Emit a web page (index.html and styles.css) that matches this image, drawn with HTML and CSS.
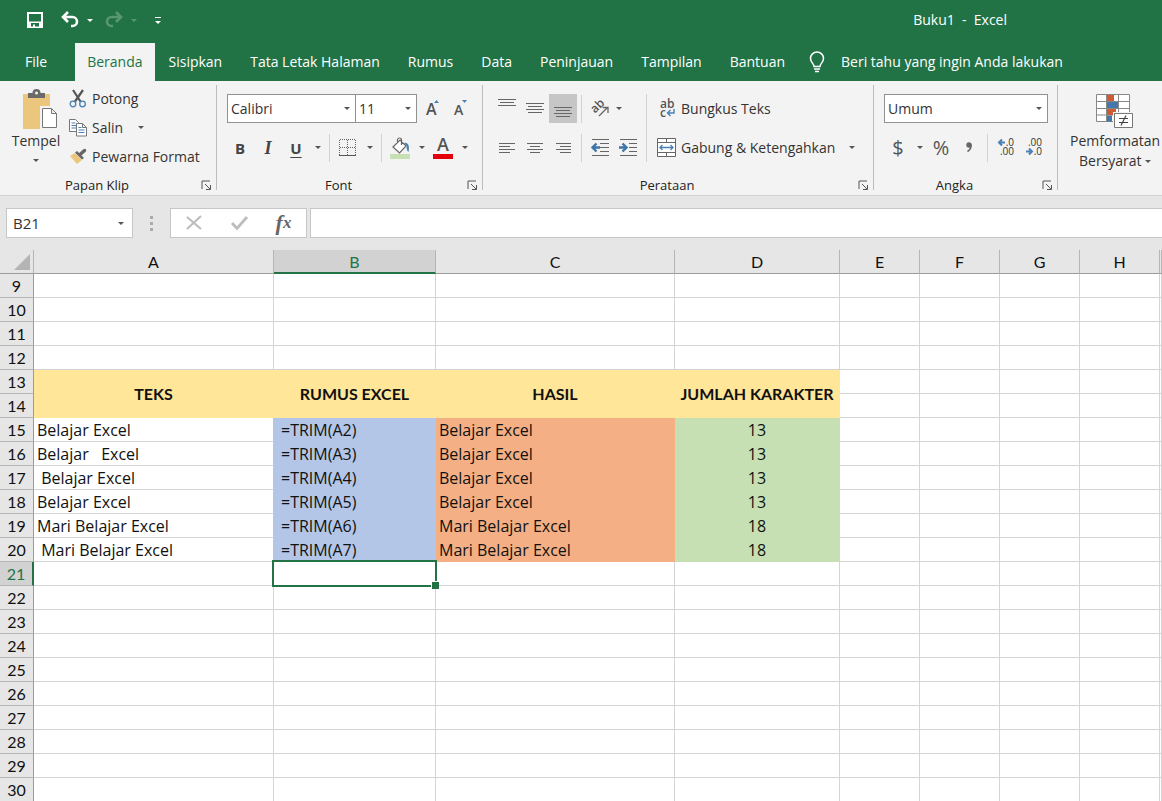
FILE: index.html
```html
<!DOCTYPE html>
<html lang="id">
<head>
<meta charset="utf-8">
<title>Buku1 - Excel</title>
<meta name="viewport" content="width=device-width, initial-scale=1">
<link rel="stylesheet" href="styles.css">
</head>
<body>
<div class="app">
<header class="titlebar">
  <div class="quick">
    <button class="quick-btn" aria-label="Simpan"><svg width="18" height="18" viewBox="0 0 18 18"><path fill="#fff" fill-rule="evenodd" d="M1 1h16v16H1zM3 3v7.500h12V3zM5 12v3.500h2V13.500h2V15.500h4V12z"/></svg></button>
    <button class="quick-btn" aria-label="Urungkan"><svg width="20" height="18" viewBox="0 0 20 18"><path d="M3 6h9.500a4.500 4.500 0 0 1 0 9H11M8 1 3 6l5 5" fill="none" stroke="#fff" stroke-width="2.600"/></svg></button>
    <button class="drop drop-light" aria-label="Daftar urungkan"></button>
    <button class="quick-btn faded" aria-label="Ulangi"><svg width="20" height="18" viewBox="0 0 20 18"><path d="M17 6H7.500a4.500 4.500 0 0 0 0 9H9M12 1l5 5-5 5" fill="none" stroke="#fff" stroke-width="2.600"/></svg></button>
    <button class="drop drop-light faded" aria-label="Daftar ulangi"></button>
    <button class="quick-btn customize" aria-label="Kustomisasi"><svg width="8" height="10" viewBox="0 0 8 10"><path d="M1 2.500h6" stroke="#fff"/><path d="M1 6h6L4 9z" fill="#fff"/></svg></button>
  </div>
  <h1 class="doc-title">Buku1&nbsp; -&nbsp; Excel</h1>
</header>
<nav class="tabs">
  <button class="tab tab-file">File</button>
  <button class="tab active">Beranda</button>
  <button class="tab">Sisipkan</button>
  <button class="tab">Tata Letak Halaman</button>
  <button class="tab">Rumus</button>
  <button class="tab">Data</button>
  <button class="tab">Peninjauan</button>
  <button class="tab">Tampilan</button>
  <button class="tab">Bantuan</button>
  <button class="tab tell"><svg width="16" height="22" viewBox="0 0 16 22"><path d="M5 15.500c0-3-3.500-4-3.500-8a6.500 6.500 0 0 1 13 0c0 4-3.500 5-3.500 8zM5 18h6M6 20.500h4" fill="none" stroke="#fff" stroke-width="1.500"/></svg>Beri tahu yang ingin Anda lakukan</button>
</nav>

<main class="ribbon">
  <section class="group clipboard">
    <div class="group-body">
      <button class="big paste"><svg width="36" height="40" viewBox="0 0 36 40"><path d="M1 5h27v35H1z" fill="#ecc67c"/><path d="M6 9V4h4.500a4 4 0 0 1 8 0H23v5z" fill="#6a6a6a"/><circle cx="14.500" cy="4" r="1.500" fill="#f3f3f3"/><path d="M18 17h17v23H18z" fill="#f3f3f3"/><path d="M20.500 19.500h9l5 5v14h-14zM29.500 19.500v5h5" fill="#fff" stroke="#777"/></svg><span>Tempel</span><i class="caret"></i></button>
      <div class="stack">
        <button class="item"><svg width="18" height="19" viewBox="0 0 18 19"><path d="M4 1l7.500 11.500M14 1 6 12.500" stroke="#555" stroke-width="2.200"/><circle cx="4" cy="15" r="2.800" fill="none" stroke="#4a80b5" stroke-width="1.300"/><circle cx="13.500" cy="15" r="2.800" fill="none" stroke="#4a80b5" stroke-width="1.300"/></svg>Potong</button>
        <button class="item"><svg width="18" height="19" viewBox="0 0 18 19"><path d="M.500 1.500h6l3 3v9h-9z" fill="#fff" stroke="#777"/><path d="M2.500 5h4M2.500 7.500h5M2.500 10h5" stroke="#4a80b5"/><path d="M7.500 5.500h6l4 4v8.500h-10zM13.500 5.500v4h4" fill="#fff" stroke="#777"/><path d="M9.500 9.500h3M9.500 12h6M9.500 14.500h6" stroke="#4a80b5"/></svg>Salin<i class="caret gap-left"></i></button>
        <button class="item"><svg width="18" height="17" viewBox="0 0 18 17"><path d="M1 8l5-3 7 7-5 4z" fill="#ecc67c"/><path d="M6 4.500 8 3l7 7-2 1.500z" fill="#666"/><path d="M11 6.500 15.500 2.500" stroke="#666" stroke-width="3.500" stroke-linecap="round"/></svg>Pewarna Format</button>
      </div>
    </div>
    <footer class="group-foot"><span>Papan Klip</span><button class="launch" aria-label="Pengaturan Papan Klip"><svg width="11" height="11" viewBox="0 0 11 11"><path d="M1 9V1h8M4 4l5 5M9.500 5v4.500H5" fill="none" stroke="#555"/></svg></button></footer>
  </section>
  <div class="divider"></div>

  <section class="group font">
    <div class="group-body rows">
      <div class="row">
        <label class="pick pick-font"><select aria-label="Font"><option>Calibri</option></select></label>
        <label class="pick pick-size"><select aria-label="Ukuran font"><option>11</option></select></label>
        <button class="tool grow" aria-label="Perbesar font"><svg width="16" height="20" viewBox="0 0 16 20"><text x="3" y="16" class="glyph g16">A</text><path d="M11 4l2.500-3L16 4z" fill="#4a80b5"/></svg></button>
        <button class="tool" aria-label="Perkecil font"><svg width="16" height="20" viewBox="0 0 16 20"><text x="3" y="16" class="glyph g14">A</text><path d="M11 1h5l-2.500 3z" fill="#4a80b5"/></svg></button>
      </div>
      <div class="row">
        <button class="tool bold">B</button>
        <button class="tool italic">I</button>
        <button class="tool under">U</button>
        <button class="drop" aria-label="Jenis garis bawah"></button>
        <div class="sep"></div>
        <button class="tool" aria-label="Batas"><svg width="18" height="18" viewBox="0 0 18 18"><path d="M1 .500h16M1 8.500h16M.500 1v16M8.500 1v16M16.500 1v16" stroke="#666" stroke-dasharray="1 1" fill="none"/><path d="M0 16.500h17" stroke="#555"/></svg></button>
        <button class="drop" aria-label="Jenis batas"></button>
        <div class="sep"></div>
        <button class="tool" aria-label="Warna isian"><svg width="20" height="22" viewBox="0 0 20 22"><path d="M3 10l7-7 6 6-6.500 7zM7.500 6V3a2 2 0 0 1 4 0v5" fill="#fff" stroke="#666" stroke-width="1.200"/><path d="M14 6c4-1 6 3 4.500 9-1.500-1-2-4-2-6z" fill="#4a80b5"/><path d="M0 17h20v5H0z" fill="#c6dfb3"/></svg></button>
        <button class="drop" aria-label="Pilih warna isian"></button>
        <button class="tool" aria-label="Warna font"><svg width="20" height="22" viewBox="0 0 20 22"><text x="10" y="14" text-anchor="middle" class="glyph g18">A</text><path d="M0 17h20v5H0z" fill="#e3000b"/></svg></button>
        <button class="drop" aria-label="Pilih warna font"></button>
      </div>
    </div>
    <footer class="group-foot"><span>Font</span><button class="launch" aria-label="Pengaturan Font"><svg width="11" height="11" viewBox="0 0 11 11"><path d="M1 9V1h8M4 4l5 5M9.500 5v4.500H5" fill="none" stroke="#555"/></svg></button></footer>
  </section>
  <div class="divider"></div>

  <section class="group align">
    <div class="group-body">
      <div class="rows">
        <div class="row">
          <button class="tool" aria-label="Rata atas"><svg width="18" height="20" viewBox="0 0 18 20"><path d="M0 .500h18M2 3.500h14M0 6.500h18" stroke="#666"/></svg></button>
          <button class="tool" aria-label="Rata tengah vertikal"><svg width="18" height="20" viewBox="0 0 18 20"><path d="M0 4.500h18M2 7.500h14M0 10.500h18M2 13.500h14" stroke="#666"/></svg></button>
          <button class="tool pressed" aria-label="Rata bawah"><svg width="18" height="20" viewBox="0 0 18 20"><path d="M0 8.500h18M2 11.500h14M0 14.500h18M2 17.500h14" stroke="#666"/></svg></button>
          <div class="sep"></div>
          <button class="tool" aria-label="Orientasi"><svg width="20" height="20" viewBox="0 0 20 20"><text x="3" y="14" transform="rotate(-45 5 12)" class="glyph g13">ab</text><path d="M9 17l8-8M12.500 8.500H18V14" fill="none" stroke="#666" stroke-width="1.300"/></svg></button>
          <button class="drop tight" aria-label="Pilihan orientasi"></button>
        </div>
        <div class="row">
          <button class="tool" aria-label="Rata kiri"><svg width="16" height="12" viewBox="0 0 16 12"><path d="M0 1.500h16M0 4.500h11M0 7.500h16M0 10.500h11" stroke="#666"/></svg></button>
          <button class="tool" aria-label="Rata tengah"><svg width="16" height="12" viewBox="0 0 16 12"><path d="M0 1.500h16M3 4.500h10M0 7.500h16M3 10.500h10" stroke="#666"/></svg></button>
          <button class="tool" aria-label="Rata kanan"><svg width="16" height="12" viewBox="0 0 16 12"><path d="M1 1.500h15M5 4.500h11M1 7.500h15M5 10.500h11" stroke="#666"/></svg></button>
          <div class="sep"></div>
          <button class="tool" aria-label="Kurangi inden"><svg width="20" height="17" viewBox="0 0 20 17"><path d="M2 .500h17M10 4.500h9M10 8.500h9M10 12.500h9M2 16.500h17" stroke="#666"/><path d="M10 8.500H3M6.500 4.500l-4 4 4 4" fill="none" stroke="#3e74a8" stroke-width="2.400"/></svg></button>
          <button class="tool" aria-label="Tambah inden"><svg width="20" height="17" viewBox="0 0 20 17"><path d="M2 .500h17M11 4.500h8M11 8.500h8M11 12.500h8M2 16.500h17" stroke="#666"/><path d="M1 8.500h7M4.500 4.500l4 4-4 4" fill="none" stroke="#3e74a8" stroke-width="2.400"/></svg></button>
        </div>
      </div>
      <div class="sep"></div>
      <div class="rows wraps">
        <button class="item wide"><svg width="20" height="20" viewBox="0 0 20 20"><text x="3" y="9" class="glyph g13">ab</text><text x="3" y="18" class="glyph g13">c</text><path d="M17 10v4H11M13.500 11l-3 3 3 3" fill="none" stroke="#4a80b5" stroke-width="1.400"/></svg>Bungkus Teks</button>
        <button class="item wide"><svg width="20" height="20" viewBox="0 0 20 20"><path d="M.500.500h18v18H.500zM.500 4.500h18M.500 14.500h18M9.500.500v4M9.500 14.500v4" fill="#fff" stroke="#666"/><path d="M3 9.500h13M5.500 7 3 9.500 5.500 12M13.500 7 16 9.500 13.500 12" fill="none" stroke="#4a80b5" stroke-width="1.300"/></svg>Gabung &amp; Ketengahkan<i class="caret gap-left"></i></button>
      </div>
    </div>
    <footer class="group-foot"><span>Perataan</span><button class="launch" aria-label="Pengaturan Perataan"><svg width="11" height="11" viewBox="0 0 11 11"><path d="M1 9V1h8M4 4l5 5M9.500 5v4.500H5" fill="none" stroke="#555"/></svg></button></footer>
  </section>
  <div class="divider"></div>

  <section class="group number">
    <div class="group-body rows">
      <div class="row"><label class="pick pick-format"><select aria-label="Format angka"><option>Umum</option></select></label></div>
      <div class="row">
        <button class="tool symbol dollar">$</button>
        <button class="drop" aria-label="Pilih mata uang"></button>
        <button class="tool symbol">%</button>
        <button class="tool" aria-label="Gaya koma"><svg width="10" height="14" viewBox="0 0 10 14"><circle cx="5" cy="4" r="2.700" fill="#666"/><path d="M6.800 3.500c.5 3-.8 5.500-3.300 7" fill="none" stroke="#666" stroke-width="1.700"/></svg></button>
        <div class="sep"></div>
        <button class="tool" aria-label="Tambah desimal"><svg width="18" height="19" viewBox="0 0 18 19"><text x="17" y="8" text-anchor="end" class="digits">.0</text><text x="17" y="17" text-anchor="end" class="digits">.00</text><path d="M8 4.500H3M5 1.500l-3 3 3 3" fill="none" stroke="#4a80b5" stroke-width="2"/></svg></button>
        <button class="tool" aria-label="Kurangi desimal"><svg width="18" height="19" viewBox="0 0 18 19"><text x="17" y="8" text-anchor="end" class="digits">.00</text><text x="17" y="17" text-anchor="end" class="digits">.0</text><path d="M1 13.500h5M4 10.500l3 3-3 3" fill="none" stroke="#4a80b5" stroke-width="2"/></svg></button>
      </div>
    </div>
    <footer class="group-foot"><span>Angka</span><button class="launch" aria-label="Pengaturan Angka"><svg width="11" height="11" viewBox="0 0 11 11"><path d="M1 9V1h8M4 4l5 5M9.500 5v4.500H5" fill="none" stroke="#555"/></svg></button></footer>
  </section>
  <div class="divider"></div>

  <section class="group styles">
    <button class="big conditional"><svg width="38" height="36" viewBox="0 0 38 36"><path d="M.500.500h33v27H.500zM.500 7.500h33M.500 14.500h33M.500 21h33M10.500.500v27M22.500.500v27" fill="#fff" stroke="#888"/><path d="M11 1h7v6h-7zM11 15h9v6h-9z" fill="#cf5b35"/><path d="M11 8h11v6H11zM11 21.500h5v6h-5z" fill="#4478ad"/><path d="M17 18h21v18H17z" fill="#f3f3f3"/><path d="M18.500 19.500h18v14h-18z" fill="#fff" stroke="#777"/><path d="M23 24.500h9M23 28.500h9M30 21.500l-5 10" stroke="#444" stroke-width="1.200"/></svg><span>Pemformatan</span><span>Bersyarat <i class="caret"></i></span></button>
  </section>
</main>

<div class="formula">
  <div class="namebox"><input type="text" value="B21" aria-label="Kotak nama"><button class="drop" aria-label="Daftar nama"></button></div>
  <div class="dots"><i></i><i></i><i></i></div>
  <div class="fx">
    <button aria-label="Batal"><svg width="18" height="16" viewBox="0 0 18 16"><path d="M2 2l14 12M16 1 2 14" stroke="#bdbdbd" stroke-width="2.200"/></svg></button>
    <button aria-label="Masukkan"><svg width="18" height="16" viewBox="0 0 18 16"><path d="M2 8l5 5.500L17 2" fill="none" stroke="#bdbdbd" stroke-width="2.800"/></svg></button>
    <button class="fx-name" aria-label="Sisipkan fungsi">f<small>x</small></button>
  </div>
  <input class="formula-input" type="text" aria-label="Bilah rumus">
</div>

<div class="sheet">
<table class="grid">
<colgroup><col class="c-num"><col class="c-a"><col class="c-b"><col class="c-c"><col class="c-d"><col class="c-std"><col class="c-std"><col class="c-std"><col class="c-std"><col></colgroup>
<thead><tr><th class="corner"><svg width="16" height="16" viewBox="0 0 16 16"><path d="M16 0v16H0z" fill="#b4b4b4"/></svg></th><th>A</th><th class="on">B</th><th>C</th><th>D</th><th>E</th><th>F</th><th>G</th><th>H</th><th></th></tr></thead>
<tbody>
<tr><th>9</th><td></td><td></td><td></td><td></td><td></td><td></td><td></td><td></td><td></td></tr>
<tr><th>10</th><td></td><td></td><td></td><td></td><td></td><td></td><td></td><td></td><td></td></tr>
<tr><th>11</th><td></td><td></td><td></td><td></td><td></td><td></td><td></td><td></td><td></td></tr>
<tr><th>12</th><td></td><td></td><td></td><td></td><td></td><td></td><td></td><td></td><td></td></tr>
<tr><th>13</th><td rowspan="2" class="head">TEKS</td><td rowspan="2" class="head">RUMUS EXCEL</td><td rowspan="2" class="head">HASIL</td><td rowspan="2" class="head">JUMLAH KARAKTER</td><td></td><td></td><td></td><td></td><td></td></tr>
<tr><th>14</th><td></td><td></td><td></td><td></td><td></td></tr>
<tr><th>15</th><td class="teks">Belajar Excel</td><td class="rumus">=TRIM(A2)</td><td class="hasil">Belajar Excel</td><td class="jumlah">13</td><td></td><td></td><td></td><td></td><td></td></tr>
<tr><th>16</th><td class="teks">Belajar   Excel</td><td class="rumus">=TRIM(A3)</td><td class="hasil">Belajar Excel</td><td class="jumlah">13</td><td></td><td></td><td></td><td></td><td></td></tr>
<tr><th>17</th><td class="teks"> Belajar Excel</td><td class="rumus">=TRIM(A4)</td><td class="hasil">Belajar Excel</td><td class="jumlah">13</td><td></td><td></td><td></td><td></td><td></td></tr>
<tr><th>18</th><td class="teks">Belajar Excel</td><td class="rumus">=TRIM(A5)</td><td class="hasil">Belajar Excel</td><td class="jumlah">13</td><td></td><td></td><td></td><td></td><td></td></tr>
<tr><th>19</th><td class="teks">Mari Belajar Excel</td><td class="rumus">=TRIM(A6)</td><td class="hasil">Mari Belajar Excel</td><td class="jumlah">18</td><td></td><td></td><td></td><td></td><td></td></tr>
<tr><th>20</th><td class="teks"> Mari Belajar Excel</td><td class="rumus">=TRIM(A7)</td><td class="hasil">Mari Belajar Excel</td><td class="jumlah">18</td><td></td><td></td><td></td><td></td><td></td></tr>
<tr><th class="on">21</th><td></td><td class="selected"></td><td></td><td></td><td></td><td></td><td></td><td></td><td></td></tr>
<tr><th>22</th><td></td><td></td><td></td><td></td><td></td><td></td><td></td><td></td><td></td></tr>
<tr><th>23</th><td></td><td></td><td></td><td></td><td></td><td></td><td></td><td></td><td></td></tr>
<tr><th>24</th><td></td><td></td><td></td><td></td><td></td><td></td><td></td><td></td><td></td></tr>
<tr><th>25</th><td></td><td></td><td></td><td></td><td></td><td></td><td></td><td></td><td></td></tr>
<tr><th>26</th><td></td><td></td><td></td><td></td><td></td><td></td><td></td><td></td><td></td></tr>
<tr><th>27</th><td></td><td></td><td></td><td></td><td></td><td></td><td></td><td></td><td></td></tr>
<tr><th>28</th><td></td><td></td><td></td><td></td><td></td><td></td><td></td><td></td><td></td></tr>
<tr><th>29</th><td></td><td></td><td></td><td></td><td></td><td></td><td></td><td></td><td></td></tr>
<tr><th>30</th><td></td><td></td><td></td><td></td><td></td><td></td><td></td><td></td><td></td></tr>
</tbody>
</table>
</div>
</div>
</body>
</html>
```
FILE: styles.css
```css
* { box-sizing: border-box; }
body { margin: 0; font: 14px/20px "Open Sans", "Noto Sans", sans-serif; color: #333; background: #fff; }
button, input, select { font: inherit; color: inherit; }
button { display: flex; align-items: center; justify-content: center; margin: 0; padding: 0; border: 0; background: none; white-space: nowrap; }
svg { display: block; flex: none; overflow: visible; }
.app { display: flex; flex-direction: column; height: 100vh; overflow: hidden; }

/* Title bar */
.titlebar { flex: none; display: flex; align-items: center; justify-content: space-between; height: 43px; padding: 0 155px 3px 25px; background: #217346; color: #fff; }
.quick { display: flex; align-items: center; }
.quick-btn { width: 20px; height: 24px; }
.quick-btn + .quick-btn { margin-left: 15px; }
.quick .drop { width: 20px; }
.drop + .quick-btn, .quick-btn.customize { margin-left: 4px; }
.faded { opacity: .25; }
.doc-title { margin: 0; font-size: 14px; font-weight: 400; }

/* Carets */
.drop { width: 15px; height: 24px; }
.drop::after, .caret, .pick::after { content: ""; display: inline-block; border: 3px solid transparent; border-top-color: #555; border-bottom: 0; }
.drop-light::after { border-top-color: #fff; }
.drop.tight { width: 10px; }
.gap-left { margin-left: 10px; }

/* Tabs */
.tabs { flex: none; display: flex; height: 38px; padding-left: 11px; background: #217346; color: #fff; }
.tab { padding: 0 14px; }
.tab-file { margin-right: 14px; }
.tab.active { padding: 0 12px; background: #f3f3f3; color: #217346; }
.tab + .tab.tell { gap: 16px; margin-left: 10px; padding: 0; }

/* Ribbon */
.ribbon { flex: none; display: flex; padding-top: 4px; height: 115px; overflow: hidden; background: #f3f3f3; border-bottom: 1px solid #d2d2d2; }
.group { flex: none; display: flex; flex-direction: column; }
.divider { flex: none; width: 1px; height: 105px; background: #bcbcbc; }
.group-body { display: flex; height: 91px; }
.clipboard { width: 216px; }
.font { width: 265px; }
.font .group-body { padding-left: 9px; }
.align { width: 390px; }
.number { width: 183px; }
.align .group-body, .number .group-body { padding-left: 10px; }
.styles { flex: 1 0 auto; padding: 9px 0 0 12px; align-items: flex-start; }
.group-foot { display: flex; align-items: center; height: 18px; padding-right: 4px; font-size: 13px; line-height: 18px; color: #222; }
.group-foot span { flex: 1; padding-right: 6px; text-align: center; }
.launch { width: 12px; }
.big { flex-direction: column; justify-content: flex-start; align-items: center; }
.paste { width: 56px; margin-left: 8px; padding-top: 4px; }
.paste svg { margin: 0 0 2px 8px; }
.paste .caret { margin-top: 8px; }
.stack { display: flex; flex-direction: column; gap: 2px; align-items: flex-start; padding-left: 5px; }
.item { gap: 5px; height: 27px; }
.item.wide { gap: 4px; height: 29px; }
.rows { display: flex; flex-direction: column; gap: 10px; }
.group-body.rows, .align .group-body { padding-top: 9px; }
.row { display: flex; align-items: center; height: 29px; }
.wraps { align-items: flex-start; padding-left: 6px; }
.sep { flex: none; width: 1px; height: 28px; margin: 0 4px; background: #d2d2d2; }
.align .group-body > .sep { height: 68px; }
.tool { flex: none; width: 28px; height: 29px; color: #444; }
.tool.pressed { background: #c6c6c6; }
.bold, .under { font-weight: 700; font-size: 15px; }
.italic { font: italic 700 18px/20px "Liberation Serif", serif; }
.under { text-decoration: underline; text-decoration-thickness: 1px; text-underline-offset: 3px; }
.symbol { font-size: 20px; color: #555; }
.pick { position: relative; display: block; height: 29px; }
.pick::after { position: absolute; right: 6px; top: 13px; pointer-events: none; }
.pick select { appearance: none; width: 100%; height: 100%; margin: 0; padding: 0 3px; border: 1px solid #919191; border-radius: 0; background: #fff; color: #333; }
.pick-font { width: 129px; margin-left: 1px; }
.pick-size { width: 62px; margin-left: -1px; }
.pick-format { width: 164px; }
.glyph { font-family: "Open Sans", sans-serif; font-weight: 600; fill: #555; }
.g13 { font-size: 12px; }
.g14 { font-size: 14px; }
.g16 { font-size: 16px; }
.g18 { font-size: 18px; }
.digits { font: 400 10px "Open Sans", sans-serif; fill: #333; }
.conditional svg { margin-bottom: 1px; }
.conditional .caret { vertical-align: 3px; }

/* Formula bar */
.formula { flex: none; display: flex; align-items: center; height: 54px; padding: 0 0 0 6px; background: #e6e6e6; }
.namebox { display: flex; align-items: center; width: 127px; height: 30px; padding-right: 4px; border: 1px solid #c6c6c6; background: #fff; }
.namebox input { flex: 1; min-width: 0; padding: 0 6px; border: 0; background: none; font-size: 15px; }
.dots { display: flex; flex-direction: column; align-items: center; gap: 3px; width: 37px; }
.dots i { width: 3px; height: 3px; background: #aaa; }
.fx { display: flex; width: 137px; height: 30px; border: 1px solid #c6c6c6; background: #fff; }
.fx button { flex: 1; }
.fx .fx-name { font: italic 700 22px/28px "Liberation Serif", serif; color: #666; }
.fx-name small { font-size: 17px; }
.formula-input { flex: 1; min-width: 0; height: 30px; margin-left: 3px; padding: 0 6px; border: 1px solid #c6c6c6; border-right: 0; background: #fff; }

/* Sheet */
.sheet { flex: 1; min-height: 0; overflow: hidden; }
.grid { width: 100%; table-layout: fixed; border-collapse: separate; border-spacing: 0; font: 16px/20px "Open Sans", sans-serif; color: #111; }
.c-num { width: 34px; }
.c-a { width: 240px; }
.c-b { width: 162px; }
.c-c { width: 239px; }
.c-d { width: 165px; }
.c-std { width: 80px; }
.grid th, .grid td { height: 24px; padding: 1px 0 0; border: 0 solid #d4d4d4; border-width: 0 1px 1px 0; white-space: pre; }
.grid th { background: #e6e6e6; border-color: #b5b5b5; font-family: Lato, sans-serif; font-weight: 400; text-align: center; }
.grid thead th { border-bottom-color: #9b9b9b; }
.grid tbody th { border-right-color: #9b9b9b; }
.grid thead .corner { padding: 4px 3px 3px 14px; }
.grid th.on { background: #d2d2d2; color: #217346; }
.grid thead th.on { border-bottom: 2px solid #217346; }
.grid tbody th.on { border-right: 2px solid #217346; }
.grid .head { padding: 0; background: #ffe699; border-color: #ffe699; font-family: Lato, sans-serif; font-weight: 700; text-align: center; }
.grid .teks { padding-left: 3px; border-right-color: #b4c6e7; }
.grid .rumus { padding-left: 7px; background: #b4c6e7; border-color: #b4c6e7; }
.grid .hasil { padding-left: 3px; background: #f4b084; border-color: #f4b084; }
.grid .jumlah { background: #c6e0b4; border-color: #c6e0b4; text-align: center; }
.grid .selected { position: relative; }
.selected::before { content: ""; position: absolute; inset: -2px; border: 2px solid #217346; }
.selected::after { content: ""; position: absolute; right: -4px; bottom: -4px; width: 7px; height: 7px; border: 1px solid #fff; border-width: 1px 0 0 1px; background: #217346; }
```
